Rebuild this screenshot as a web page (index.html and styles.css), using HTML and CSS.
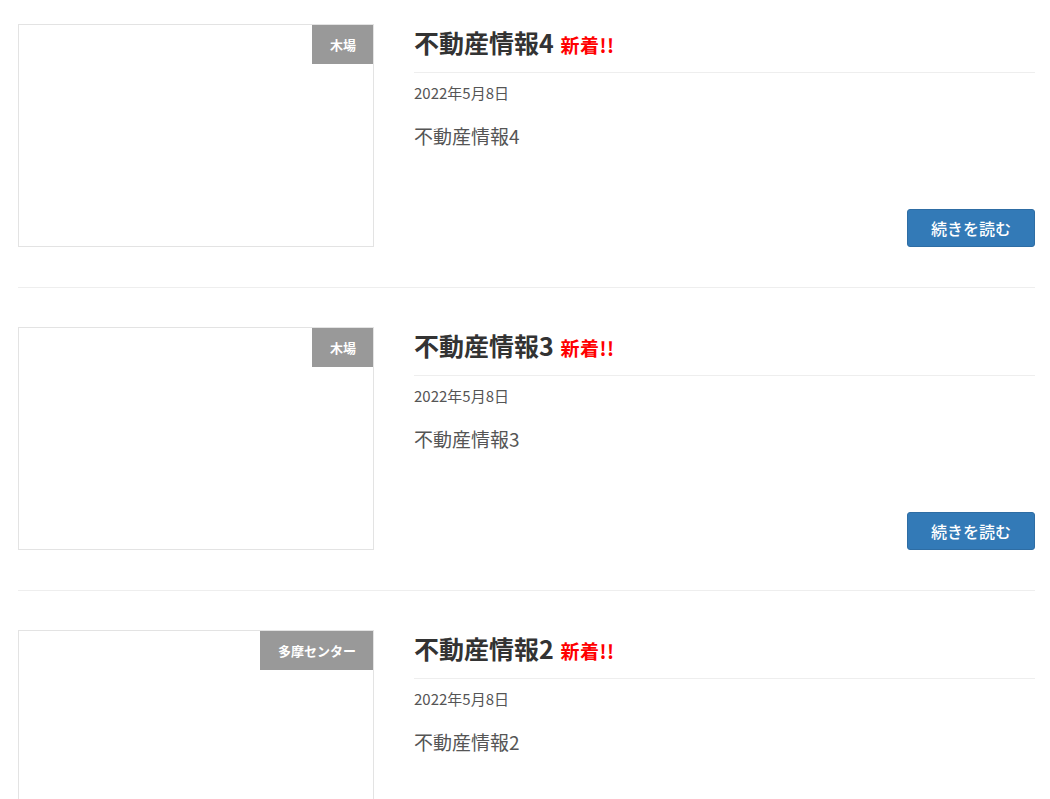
FILE: index.html
```html
<!DOCTYPE html>
<html lang="ja">
<head>
<meta charset="utf-8">
<title>不動産情報</title>
<link rel="stylesheet" href="styles.css">
</head>
<body>
<div class="list">
  <article class="post">
    <div class="thumb"><span class="badge">木場</span></div>
    <div class="content">
      <h2 class="title">不動産情報4 <span class="new">新着!!</span></h2>
      <div class="date">2022年5月8日</div>
      <p class="excerpt">不動産情報4</p>
      <div class="actions"><a class="btn" href="#">続きを読む</a></div>
    </div>
  </article>
  <article class="post">
    <div class="thumb"><span class="badge">木場</span></div>
    <div class="content">
      <h2 class="title">不動産情報3 <span class="new">新着!!</span></h2>
      <div class="date">2022年5月8日</div>
      <p class="excerpt">不動産情報3</p>
      <div class="actions"><a class="btn" href="#">続きを読む</a></div>
    </div>
  </article>
  <article class="post">
    <div class="thumb"><span class="badge">多摩センター</span></div>
    <div class="content">
      <h2 class="title">不動産情報2 <span class="new">新着!!</span></h2>
      <div class="date">2022年5月8日</div>
      <p class="excerpt">不動産情報2</p>
      <div class="actions"><a class="btn" href="#">続きを読む</a></div>
    </div>
  </article>
</div>
</body>
</html>
```

FILE: styles.css
```css
html, body {
  margin: 0;
  padding: 0;
  background: #fff;
}
body {
  font-family: "Noto Sans CJK JP", "Noto Sans", sans-serif;
  color: #555;
}
.list {
  padding: 24px 15px 0 18px;
}
.post {
  display: flex;
  gap: 40px;
  padding-bottom: 40px;
  border-bottom: 1px solid #eee;
  margin-bottom: 39px;
}
.thumb {
  position: relative;
  flex: 0 0 356px;
  height: 223px;
  box-sizing: border-box;
  border: 1px solid #e3e3e3;
  background: #fff;
}
.badge {
  position: absolute;
  top: 0;
  right: 0;
  height: 39px;
  line-height: 39px;
  padding: 0 17px 0 18px;
  background: #999;
  color: #fff;
  font-size: 13px;
  font-weight: bold;
}
.content {
  flex: 1;
  display: flex;
  flex-direction: column;
  min-width: 0;
}
.title {
  margin: 0;
  font-size: 25px;
  line-height: 36px;
  font-weight: bold;
  color: #333;
  padding-bottom: 12px;
  border-bottom: 1px solid #eee;
}
.new {
  color: #ff0000;
  font-size: 19px;
  line-height: 1;
  margin-left: 1px;
  letter-spacing: 0.5px;
}
.date {
  margin-top: 10px;
  font-size: 15px;
  line-height: 20px;
  color: #555;
}
.excerpt {
  margin: 19px 0 0;
  font-size: 19px;
  line-height: 28px;
  color: #555;
}
.actions {
  margin-top: auto;
  display: flex;
  justify-content: flex-end;
}
.btn {
  display: inline-block;
  box-sizing: border-box;
  height: 38px;
  line-height: 36px;
  padding: 0 23px;
  background: #337ab7;
  border: 1px solid #2e6da4;
  border-radius: 3px;
  color: #fff;
  font-size: 16px;
  font-weight: 500;
  text-decoration: none;
}
```
